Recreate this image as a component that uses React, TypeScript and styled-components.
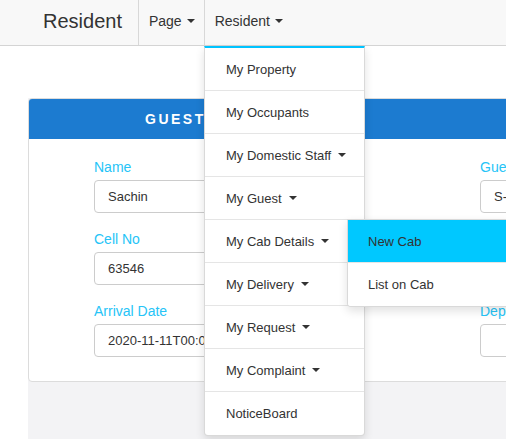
import React from "react";
import styled, { createGlobalStyle } from "styled-components";

const Global = createGlobalStyle`
  html, body {
    margin: 0;
    padding: 0;
    overflow: hidden;
    background: #ffffff;
    font-family: "Liberation Sans", Arial, sans-serif;
    color: #333333;
  }
  * { box-sizing: border-box; }
`;

const Page = styled.div`
  position: relative;
  width: 506px;
  height: 439px;
  overflow: hidden;
`;

const Navbar = styled.nav`
  display: flex;
  align-items: stretch;
  height: 46px;
  background: #f8f8f8;
  border-bottom: 1px solid #d4d4d4;
  padding-left: 43px;
`;

const Brand = styled.div`
  display: flex;
  align-items: center;
  font-size: 20px;
  color: #333;
  padding: 0 16px 3px 0;
`;

const NavLink = styled.div`
  display: flex;
  align-items: center;
  padding: 0 9px 3px 10px;
  font-size: 14px;
  color: #333;
  border-left: 1px solid #d8d8d8;
`;

const Caret = styled.span`
  display: inline-block;
  width: 0;
  height: 0;
  margin-left: 5px;
  border-top: 4px solid #333;
  border-left: 4px solid transparent;
  border-right: 4px solid transparent;
`;

const Main = styled.main`
  margin-left: 28px;
  display: flex;
  flex-direction: column;
  height: 393px;
`;

const TopGap = styled.div`
  height: 52px;
  flex: none;
`;

const Stage = styled.div`
  flex: 1;
  background: #f3f3f5;
`;

const Card = styled.section`
  width: 900px;
  background: #fff;
  border: 1px solid #dcdcdc;
  border-radius: 4px;
  overflow: hidden;
`;

const CardHeader = styled.div`
  height: 40px;
  background: #1c7bd0;
  color: #fff;
  font-weight: bold;
  font-size: 14px;
  letter-spacing: 2.5px;
  display: flex;
  align-items: center;
  padding-left: 116px;
`;

const CardBody = styled.div`
  display: grid;
  grid-template-columns: 260px 360px;
  column-gap: 126px;
  padding: 18px 0 24px 65px;
`;

const Column = styled.div`
  display: flex;
  flex-direction: column;
  gap: 16px;
`;

const Field = styled.div`
  display: flex;
  flex-direction: column;
`;

const Label = styled.label`
  font-size: 14px;
  line-height: 20px;
  color: #26c4f7;
  margin-bottom: 3px;
`;

const Input = styled.div`
  height: 33px;
  border: 1px solid #cccccc;
  border-radius: 4px;
  padding: 0 13px;
  display: flex;
  align-items: center;
  font-size: 13px;
  color: #333;
  white-space: nowrap;
  overflow: hidden;
`;

const Dropdown = styled.ul`
  position: absolute;
  left: 204px;
  top: 46px;
  width: 161px;
  margin: 0;
  padding: 0;
  list-style: none;
  background: #fff;
  border: 1px solid rgba(0, 0, 0, 0.15);
  border-top: 2px solid #00c3ff;
  border-radius: 0 0 4px 4px;
  box-shadow: 0 4px 10px rgba(0, 0, 0, 0.12);
`;

const Item = styled.li<{ $last?: boolean }>`
  position: relative;
  height: 43px;
  display: flex;
  align-items: center;
  padding-left: 21px;
  font-size: 13px;
  color: #333;
  border-bottom: ${(p) => (p.$last ? "none" : "1px solid #e5e5e5")};
`;

const ItemCaret = styled(Caret)`
  margin-left: 7px;
`;

const SubMenu = styled.ul`
  position: absolute;
  left: 142px;
  top: -1px;
  width: 162px;
  margin: 0;
  padding: 0;
  list-style: none;
  background: #fff;
  border: 1px solid rgba(0, 0, 0, 0.15);
  border-radius: 0 4px 4px 4px;
  box-shadow: 0 4px 10px rgba(0, 0, 0, 0.12);
  overflow: hidden;
  z-index: 2;
`;

const SubItem = styled.li<{ $active?: boolean }>`
  height: 43px;
  display: flex;
  align-items: center;
  padding-left: 20px;
  font-size: 13px;
  color: #333;
  background: ${(p) => (p.$active ? "#00c8ff" : "#fff")};
  border-bottom: ${(p) => (p.$active ? "1px solid #e5e5e5" : "none")};
`;

const menu = [
  { label: "My Property", caret: false },
  { label: "My Occupants", caret: false },
  { label: "My Domestic Staff", caret: true },
  { label: "My Guest", caret: true },
  { label: "My Cab Details", caret: true, sub: true },
  { label: "My Delivery", caret: true },
  { label: "My Request", caret: true },
  { label: "My Complaint", caret: true },
  { label: "NoticeBoard", caret: false },
];

export default function App() {
  return (
    <>
      <Global />
      <Page>
        <Navbar>
          <Brand>Resident</Brand>
          <NavLink>
            Page <Caret />
          </NavLink>
          <NavLink>
            Resident <Caret />
          </NavLink>
        </Navbar>
        <Main>
          <TopGap />
          <Stage>
            <Card>
              <CardHeader>GUEST DETAILS</CardHeader>
              <CardBody>
                <Column>
                  <Field>
                    <Label>Name</Label>
                    <Input>Sachin</Input>
                  </Field>
                  <Field>
                    <Label>Cell No</Label>
                    <Input>63546</Input>
                  </Field>
                  <Field>
                    <Label>Arrival Date</Label>
                    <Input>2020-11-11T00:00:00</Input>
                  </Field>
                </Column>
                <Column>
                  <Field>
                    <Label>Guest Type</Label>
                    <Input>S-1</Input>
                  </Field>
                  <Field>
                    <Label>Vehicle No</Label>
                    <Input>MH-12</Input>
                  </Field>
                  <Field>
                    <Label>Departure Date</Label>
                    <Input />
                  </Field>
                </Column>
              </CardBody>
            </Card>
          </Stage>
        </Main>
        <Dropdown>
          {menu.map((m, i) => (
            <Item key={m.label} $last={i === menu.length - 1}>
              {m.label}
              {m.caret && <ItemCaret />}
              {m.sub && (
                <SubMenu>
                  <SubItem $active>New Cab</SubItem>
                  <SubItem>List on Cab</SubItem>
                </SubMenu>
              )}
            </Item>
          ))}
        </Dropdown>
      </Page>
    </>
  );
}
